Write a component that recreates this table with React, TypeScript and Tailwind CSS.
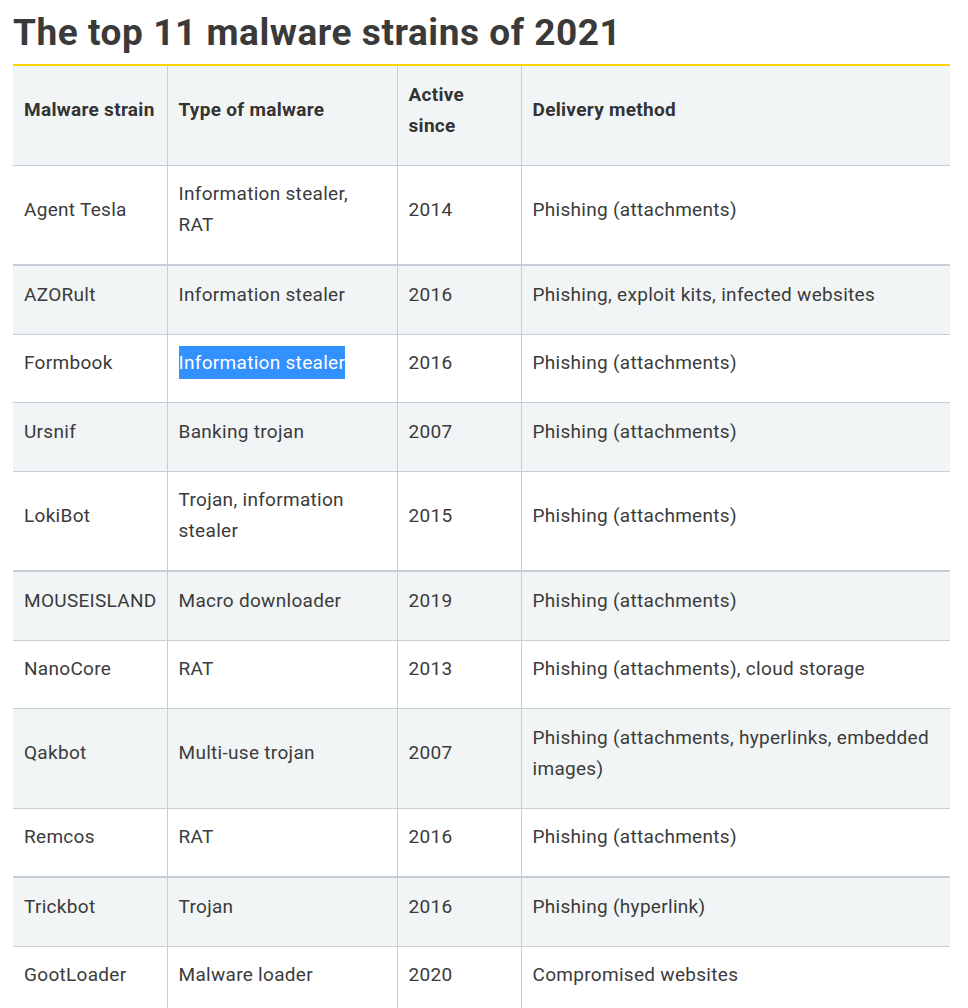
import React from "react";

const rows: { name: string; type: React.ReactNode; since: string; method: string; alt: boolean; thick?: boolean }[] = [
  { name: "Agent Tesla", type: "Information stealer, RAT", since: "2014", method: "Phishing (attachments)", alt: false },
  { name: "AZORult", type: "Information stealer", since: "2016", method: "Phishing, exploit kits, infected websites", alt: true, thick: true },
  { name: "Formbook", type: <span className="bg-[#3390ff] text-white py-[5px]">Information stealer</span>, since: "2016", method: "Phishing (attachments)", alt: false },
  { name: "Ursnif", type: "Banking trojan", since: "2007", method: "Phishing (attachments)", alt: true },
  { name: "LokiBot", type: "Trojan, information stealer", since: "2015", method: "Phishing (attachments)", alt: false },
  { name: "MOUSEISLAND", type: "Macro downloader", since: "2019", method: "Phishing (attachments)", alt: true, thick: true },
  { name: "NanoCore", type: "RAT", since: "2013", method: "Phishing (attachments), cloud storage", alt: false },
  { name: "Qakbot", type: "Multi-use trojan", since: "2007", method: "Phishing (attachments, hyperlinks, embedded images)", alt: true },
  { name: "Remcos", type: "RAT", since: "2016", method: "Phishing (attachments)", alt: false },
  { name: "Trickbot", type: "Trojan", since: "2016", method: "Phishing (hyperlink)", alt: true, thick: true },
  { name: "GootLoader", type: "Malware loader", since: "2020", method: "Compromised websites", alt: false },
];

const cell = "px-[11px] pt-[12.75px] pb-[23.75px] align-middle text-left";

export default function App() {
  return (
    <div className="bg-white min-h-[1008px] pl-[13px] pr-[18px] pt-[10px] font-['Roboto',sans-serif] text-[#3b3b3b]">
      <h2 className="text-[37px] leading-[46px] font-bold tracking-[0.55px] text-[#3a3a3a] pb-[8px]">
        The top 11 malware strains of 2021
      </h2>
      <table className="w-[937px] table-fixed border-collapse border-t-2 border-[#fcd600] text-[19px] leading-[31px] tracking-[0.3px]">
        <colgroup>
          <col className="w-[154px]" />
          <col className="w-[230px]" />
          <col className="w-[124px]" />
          <col className="w-[429px]" />
        </colgroup>
        <thead>
          <tr className="bg-[#f2f5f6] border-b border-[#c5ced6]">
            <th className={`${cell} font-bold text-[#333]`}>Malware strain</th>
            <th className={`${cell} font-bold text-[#333] border-l border-[#c5ced6]`}>Type of malware</th>
            <th className={`${cell} font-bold text-[#333] border-l border-[#c5ced6]`}>Active since</th>
            <th className={`${cell} font-bold text-[#333] border-l border-[#c5ced6]`}>Delivery method</th>
          </tr>
        </thead>
        <tbody>
          {rows.map((r) => (
            <tr
              key={r.name}
              className={`${r.alt ? "bg-[#f2f5f6]" : "bg-white"} ${r.thick ? "border-t-2" : "border-t"} border-[#c5ced6]`}
            >
              <td className={cell}>{r.name}</td>
              <td className={`${cell} border-l border-[#c5ced6]`}>{r.type}</td>
              <td className={`${cell} border-l border-[#c5ced6]`}>{r.since}</td>
              <td className={`${cell} border-l border-[#c5ced6]`}>{r.method}</td>
            </tr>
          ))}
        </tbody>
      </table>
    </div>
  );
}
